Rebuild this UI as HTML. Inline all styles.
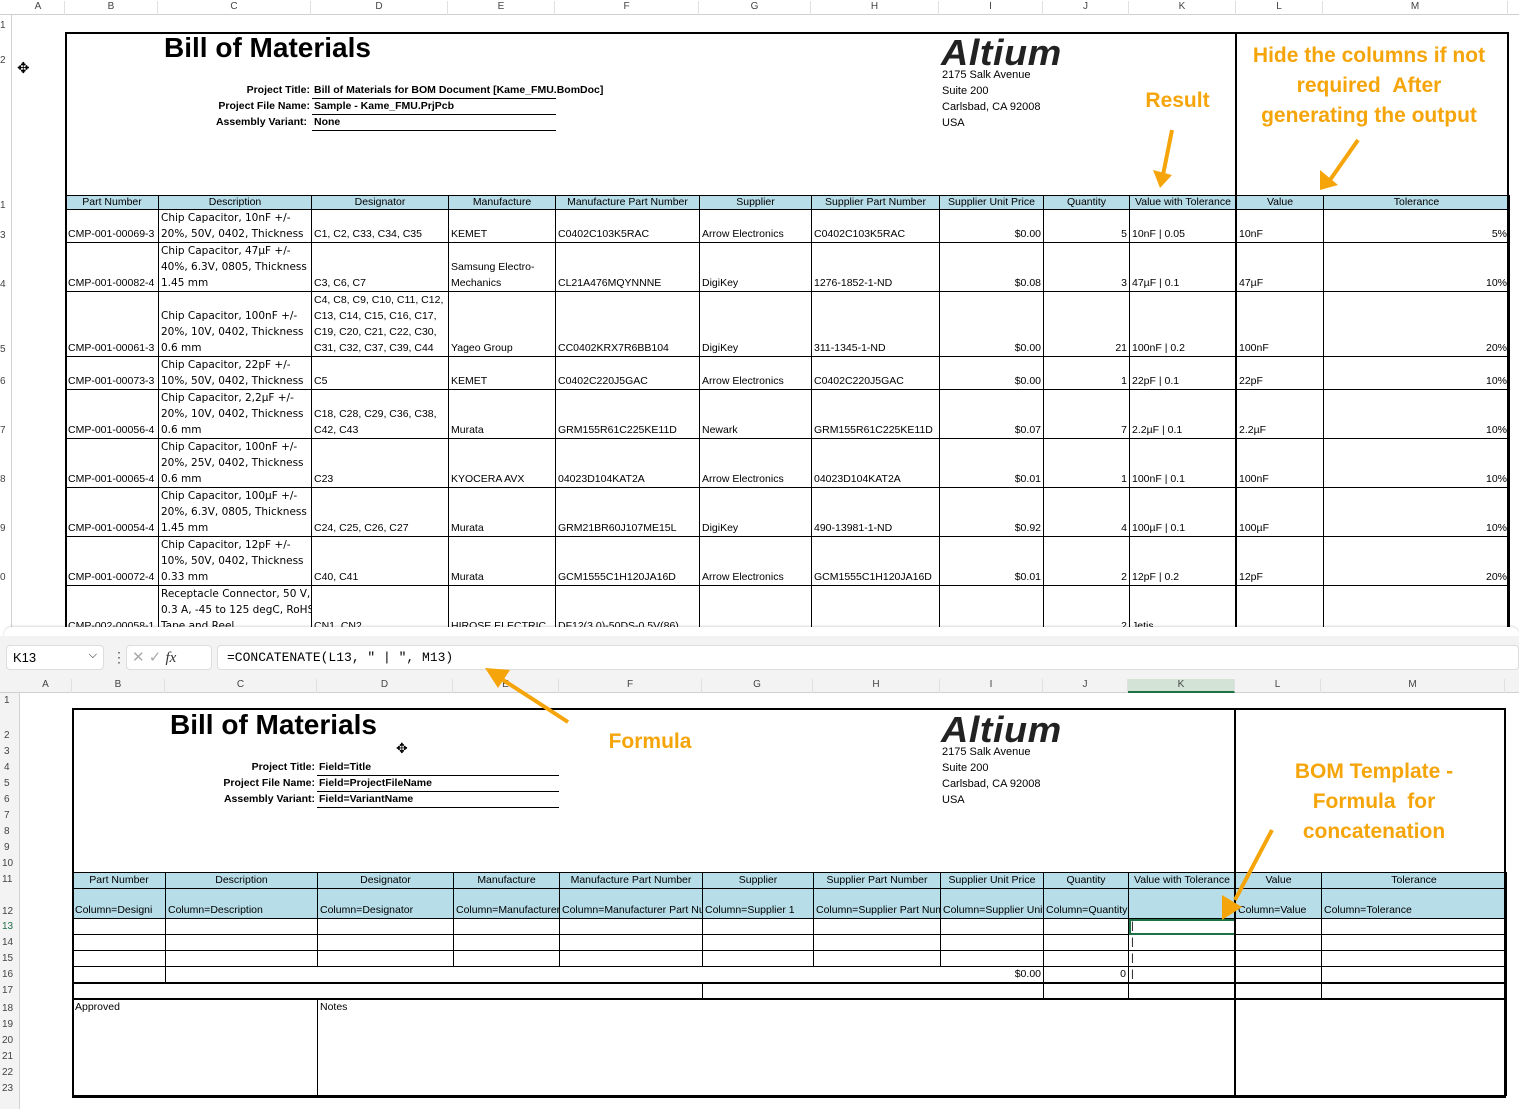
<!DOCTYPE html><html><head><meta charset="utf-8"><style>
*{margin:0;padding:0;box-sizing:border-box}
body{width:1519px;height:1109px;position:relative;overflow:hidden;background:#fff;font-family:"Liberation Sans",Arial,sans-serif;color:#000}
.a{position:absolute}
table{border-collapse:collapse;table-layout:fixed;position:absolute;font-size:10.5px}
td{border:1px solid #000;vertical-align:bottom;padding:0 2px 0;overflow:hidden;white-space:nowrap;line-height:15px}
td.w{font-family:"DejaVu Sans",sans-serif;font-size:10.5px;line-height:16px}
td.w2{line-height:16px}
tr.h td{background:#b7dde8;text-align:center;vertical-align:middle;line-height:13px}
.r{text-align:right}
.colh{position:absolute;height:15px;background:#fff;border-bottom:1px solid #d0d0d0;font-size:10px;color:#444}
.colh span{position:absolute;top:1px;text-align:center;border-right:1px solid #e0e0e0;height:14px}
.or{color:#f5a50a;font-weight:bold;font-size:21px;text-align:center;line-height:30px}
.rn{position:absolute;left:0;font-size:10px;color:#444;width:14px}
.big{font-size:28px;font-weight:bold}
.lab{font-size:10.5px;font-weight:bold}
.ul{border-bottom:1px solid #000;position:absolute;height:15px;font-size:10.5px;font-weight:bold;padding-left:2px}
.alt{font-size:36px;font-weight:900;font-style:italic;color:#222;letter-spacing:0.5px;transform:scaleX(1.05);transform-origin:left}
.addr{font-size:11px;line-height:16px}
</style></head><body>

<div class="colh" style="left:0;top:0;width:1519px">
<span style="left:12px;width:53px">A</span><span style="left:65px;width:93px">B</span><span style="left:158px;width:153px">C</span><span style="left:311px;width:137px">D</span><span style="left:448px;width:107px">E</span><span style="left:555px;width:144px">F</span><span style="left:699px;width:112px">G</span><span style="left:811px;width:128px">H</span><span style="left:939px;width:104px">I</span><span style="left:1043px;width:86px">J</span><span style="left:1129px;width:107px">K</span><span style="left:1236px;width:87px">L</span><span style="left:1323px;width:185px">M</span></div>
<div class="a" style="left:0;top:15px;width:12px;height:620px;border-right:1px solid #d0d0d0"></div>
<div class="rn" style="top:20px">1</div><div class="rn" style="top:55px">2</div><div class="rn" style="top:200px">1</div><div class="rn" style="top:230px">3</div><div class="rn" style="top:279px">4</div><div class="rn" style="top:344px">5</div><div class="rn" style="top:376px">6</div><div class="rn" style="top:425px">7</div><div class="rn" style="top:474px">8</div><div class="rn" style="top:523px">9</div><div class="rn" style="top:572px">0</div>
<div class="a" style="left:17px;top:59px;font-size:15px">✥</div>

<div class="a" style="left:65px;top:32px;width:1444px;height:164px;border:2px solid #000;border-bottom:none"></div>
<div class="a big" style="left:164px;top:32px">Bill of Materials</div>
<div class="a lab" style="left:180px;top:84px;width:130px;text-align:right">Project Title:</div>
<div class="a lab" style="left:180px;top:100px;width:130px;text-align:right">Project File Name:</div>
<div class="a lab" style="left:180px;top:116px;width:127px;text-align:right">Assembly Variant:</div>
<div class="ul" style="left:312px;top:84px;width:244px;white-space:nowrap;overflow:visible">Bill of Materials for BOM Document [Kame_FMU.BomDoc]</div>
<div class="ul" style="left:312px;top:100px;width:244px">Sample - Kame_FMU.PrjPcb</div>
<div class="ul" style="left:312px;top:116px;width:244px">None</div>
<div class="a alt" style="left:941px;top:32px">Altium</div>
<div class="a addr" style="left:942px;top:67px">2175 Salk Avenue<br>Suite 200<br>Carlsbad, CA 92008<br>USA</div>
<div class="a or" style="left:1130px;top:86px;width:95px">Result</div>
<div class="a or" style="left:1240px;top:41px;width:258px">Hide the columns if not<br>required &nbsp;After<br>generating the output</div>

<table style="left:65px;top:195px;width:1444px">
<colgroup><col style="width:93px"><col style="width:153px"><col style="width:137px"><col style="width:107px"><col style="width:144px"><col style="width:112px"><col style="width:128px"><col style="width:104px"><col style="width:86px"><col style="width:107px"><col style="width:87px"><col style="width:186px"></colgroup>
<tr class="h" style="height:14px"><td>Part Number</td><td>Description</td><td>Designator</td><td>Manufacture</td><td>Manufacture Part Number</td><td>Supplier</td><td>Supplier Part Number</td><td>Supplier Unit Price</td><td>Quantity</td><td>Value with Tolerance</td><td>Value</td><td>Tolerance</td></tr>
<tr style="height:33px"><td>CMP-001-00069-3</td><td class="w">Chip Capacitor, 10nF +/-<br>20%, 50V, 0402, Thickness</td><td>C1, C2, C33, C34, C35</td><td>KEMET</td><td>C0402C103K5RAC</td><td>Arrow Electronics</td><td>C0402C103K5RAC</td><td class="r">$0.00</td><td class="r">5</td><td>10nF | 0.05</td><td>10nF</td><td class="r">5%</td></tr>
<tr style="height:49px"><td>CMP-001-00082-4</td><td class="w">Chip Capacitor, 47µF +/-<br>40%, 6.3V, 0805, Thickness<br>1.45 mm</td><td>C3, C6, C7</td><td class="w2">Samsung Electro-<br>Mechanics</td><td>CL21A476MQYNNNE</td><td>DigiKey</td><td>1276-1852-1-ND</td><td class="r">$0.08</td><td class="r">3</td><td>47µF | 0.1</td><td>47µF</td><td class="r">10%</td></tr>
<tr style="height:65px"><td>CMP-001-00061-3</td><td class="w">Chip Capacitor, 100nF +/-<br>20%, 10V, 0402, Thickness<br>0.6 mm</td><td class="w2">C4, C8, C9, C10, C11, C12,<br>C13, C14, C15, C16, C17,<br>C19, C20, C21, C22, C30,<br>C31, C32, C37, C39, C44</td><td>Yageo Group</td><td>CC0402KRX7R6BB104</td><td>DigiKey</td><td>311-1345-1-ND</td><td class="r">$0.00</td><td class="r">21</td><td>100nF | 0.2</td><td>100nF</td><td class="r">20%</td></tr>
<tr style="height:32px"><td>CMP-001-00073-3</td><td class="w">Chip Capacitor, 22pF +/-<br>10%, 50V, 0402, Thickness</td><td>C5</td><td>KEMET</td><td>C0402C220J5GAC</td><td>Arrow Electronics</td><td>C0402C220J5GAC</td><td class="r">$0.00</td><td class="r">1</td><td>22pF | 0.1</td><td>22pF</td><td class="r">10%</td></tr>
<tr style="height:49px"><td>CMP-001-00056-4</td><td class="w">Chip Capacitor, 2,2µF +/-<br>20%, 10V, 0402, Thickness<br>0.6 mm</td><td class="w2">C18, C28, C29, C36, C38,<br>C42, C43</td><td>Murata</td><td>GRM155R61C225KE11D</td><td>Newark</td><td>GRM155R61C225KE11D</td><td class="r">$0.07</td><td class="r">7</td><td>2.2µF | 0.1</td><td>2.2µF</td><td class="r">10%</td></tr>
<tr style="height:49px"><td>CMP-001-00065-4</td><td class="w">Chip Capacitor, 100nF +/-<br>20%, 25V, 0402, Thickness<br>0.6 mm</td><td>C23</td><td>KYOCERA AVX</td><td>04023D104KAT2A</td><td>Arrow Electronics</td><td>04023D104KAT2A</td><td class="r">$0.01</td><td class="r">1</td><td>100nF | 0.1</td><td>100nF</td><td class="r">10%</td></tr>
<tr style="height:49px"><td>CMP-001-00054-4</td><td class="w">Chip Capacitor, 100µF +/-<br>20%, 6.3V, 0805, Thickness<br>1.45 mm</td><td>C24, C25, C26, C27</td><td>Murata</td><td>GRM21BR60J107ME15L</td><td>DigiKey</td><td>490-13981-1-ND</td><td class="r">$0.92</td><td class="r">4</td><td>100µF | 0.1</td><td>100µF</td><td class="r">10%</td></tr>
<tr style="height:49px"><td>CMP-001-00072-4</td><td class="w">Chip Capacitor, 12pF +/-<br>10%, 50V, 0402, Thickness<br>0.33 mm</td><td>C40, C41</td><td>Murata</td><td>GCM1555C1H120JA16D</td><td>Arrow Electronics</td><td>GCM1555C1H120JA16D</td><td class="r">$0.01</td><td class="r">2</td><td>12pF | 0.2</td><td>12pF</td><td class="r">20%</td></tr>
<tr style="height:49px"><td>CMP-002-00058-1</td><td class="w">Receptacle Connector, 50 V,<br>0.3 A, -45 to 125 degC, RoHS,<br>Tape and Reel</td><td>CN1, CN2</td><td>HIROSE ELECTRIC</td><td>DF12(3.0)-50DS-0.5V(86)</td><td></td><td></td><td></td><td class="r">2</td><td>Jetis</td><td></td><td></td></tr>
</table>
<div class="a" style="left:65px;top:32px;width:2px;height:600px;background:#000"></div>
<div class="a" style="left:1235px;top:32px;width:2px;height:600px;background:#000"></div>
<div class="a" style="left:1507px;top:32px;width:2px;height:600px;background:#000"></div>
<svg class="a" style="left:1140px;top:125px" width="50" height="70"><path d="M32 5 L22 55" stroke="#f5a50a" stroke-width="4" fill="none"/><path d="M13 45 L20 63 L32 50Z" fill="#f5a50a"/></svg>
<svg class="a" style="left:1310px;top:135px" width="60" height="60"><path d="M48 5 L20 45" stroke="#f5a50a" stroke-width="4" fill="none"/><path d="M10 35 L10 55 L28 50Z" fill="#f5a50a"/></svg>

<div class="a" style="left:4px;top:627px;width:1515px;height:20px;background:#fff;border-radius:8px 8px 0 0;box-shadow:0 -1px 2px rgba(0,0,0,.15)"></div>
<div class="a" style="left:0;top:636px;width:1519px;height:56px;background:#f3f3f3"></div>
<div class="a" style="left:6px;top:645px;width:98px;height:25px;background:#fff;border:1px solid #ddd;border-radius:4px;font-size:13px;padding:4px 0 0 6px">K13<span style="position:absolute;right:6px;top:3px;font-size:11px">⌵</span></div>
<div class="a" style="left:112px;top:649px;font-size:14px;color:#555">⋮</div>
<div class="a" style="left:126px;top:645px;width:86px;height:25px;background:#fff;border:1px solid #ddd;border-radius:4px;font-size:15px;color:#aaa;padding:2px 0 0 5px">✕ ✓ <i style="color:#333;font-family:'Liberation Serif'">fx</i></div>
<div class="a" style="left:217px;top:645px;width:1302px;height:25px;background:#fff;border:1px solid #ddd;border-radius:4px;font-family:'Liberation Mono',monospace;font-size:13px;padding:4px 0 0 9px">=CONCATENATE(L13, " | ", M13)</div>

<div class="colh" style="left:0;top:678px;width:1519px;background:#f3f3f3">
<span style="left:20px;width:52px">A</span><span style="left:72px;width:93px">B</span><span style="left:165px;width:152px">C</span><span style="left:317px;width:136px">D</span><span style="left:453px;width:106px">E</span><span style="left:559px;width:143px">F</span><span style="left:702px;width:111px">G</span><span style="left:813px;width:127px">H</span><span style="left:940px;width:103px">I</span><span style="left:1043px;width:85px">J</span><span style="left:1128px;width:107px;background:#d3e3d6;border-bottom:2px solid #1e7145">K</span><span style="left:1235px;width:86px">L</span><span style="left:1321px;width:184px">M</span></div>
<div class="a" style="left:0;top:693px;width:20px;height:416px;background:#f3f3f3;border-right:1px solid #d0d0d0"></div>
<div class="rn" style="top:695px;left:4px">1</div><div class="rn" style="top:730px;left:4px">2</div><div class="rn" style="top:746px;left:4px">3</div><div class="rn" style="top:762px;left:4px">4</div><div class="rn" style="top:778px;left:4px">5</div><div class="rn" style="top:794px;left:4px">6</div><div class="rn" style="top:810px;left:4px">7</div><div class="rn" style="top:826px;left:4px">8</div><div class="rn" style="top:842px;left:4px">9</div><div class="rn" style="top:858px;left:2px">10</div><div class="rn" style="top:874px;left:2px">11</div><div class="rn" style="top:906px;left:2px">12</div><div class="rn" style="top:921px;left:2px;color:#1e7145">13</div><div class="rn" style="top:937px;left:2px">14</div><div class="rn" style="top:953px;left:2px">15</div><div class="rn" style="top:969px;left:2px">16</div><div class="rn" style="top:985px;left:2px">17</div><div class="rn" style="top:1003px;left:2px">18</div><div class="rn" style="top:1019px;left:2px">19</div><div class="rn" style="top:1035px;left:2px">20</div><div class="rn" style="top:1051px;left:2px">21</div><div class="rn" style="top:1067px;left:2px">22</div><div class="rn" style="top:1083px;left:2px">23</div>

<div class="a" style="left:72px;top:708px;width:1434px;height:165px;border:2px solid #000;border-bottom:none"></div>
<div class="a big" style="left:170px;top:709px">Bill of Materials</div>
<div class="a" style="left:396px;top:740px;font-size:14px">✥</div>
<div class="a lab" style="left:185px;top:761px;width:130px;text-align:right">Project Title:</div>
<div class="a lab" style="left:185px;top:777px;width:130px;text-align:right">Project File Name:</div>
<div class="a lab" style="left:185px;top:793px;width:130px;text-align:right">Assembly Variant:</div>
<div class="ul" style="left:317px;top:761px;width:242px">Field=Title</div>
<div class="ul" style="left:317px;top:777px;width:242px">Field=ProjectFileName</div>
<div class="ul" style="left:317px;top:793px;width:242px">Field=VariantName</div>
<div class="a alt" style="left:941px;top:709px">Altium</div>
<div class="a addr" style="left:942px;top:744px">2175 Salk Avenue<br>Suite 200<br>Carlsbad, CA 92008<br>USA</div>
<div class="a or" style="left:600px;top:727px;width:100px">Formula</div>
<div class="a or" style="left:1265px;top:757px;width:218px">BOM Template -<br>Formula &nbsp;for<br>concatenation</div>

<table style="left:72px;top:872px;width:1434px">
<colgroup><col style="width:93px"><col style="width:152px"><col style="width:136px"><col style="width:106px"><col style="width:143px"><col style="width:111px"><col style="width:127px"><col style="width:103px"><col style="width:85px"><col style="width:107px"><col style="width:86px"><col style="width:185px"></colgroup>
<tr class="h" style="height:16px"><td>Part Number</td><td>Description</td><td>Designator</td><td>Manufacture</td><td>Manufacture Part Number</td><td>Supplier</td><td>Supplier Part Number</td><td>Supplier Unit Price</td><td>Quantity</td><td>Value with Tolerance</td><td>Value</td><td>Tolerance</td></tr>
<tr style="height:30px;background:#b7dde8"><td>Column=Designi</td><td>Column=Description</td><td>Column=Designator</td><td>Column=Manufacturer</td><td>Column=Manufacturer Part Nu</td><td>Column=Supplier 1</td><td>Column=Supplier Part Num</td><td>Column=Supplier Unit</td><td>Column=Quantity</td><td></td><td>Column=Value</td><td>Column=Tolerance</td></tr>
<tr style="height:16px"><td></td><td></td><td></td><td></td><td></td><td></td><td></td><td></td><td></td><td style="outline:2px solid #1e7145;outline-offset:-2px">|</td><td></td><td></td></tr>
<tr style="height:16px"><td></td><td></td><td></td><td></td><td></td><td></td><td></td><td></td><td></td><td>|</td><td></td><td></td></tr>
<tr style="height:16px"><td></td><td></td><td></td><td></td><td></td><td></td><td></td><td></td><td></td><td>|</td><td></td><td></td></tr>
<tr style="height:16px"><td style="border-bottom:2px solid #000"></td><td colspan="7" class="r" style="border-bottom:2px solid #000">$0.00</td><td class="r" style="border-bottom:2px solid #000">0</td><td style="border-bottom:2px solid #000">|</td><td style="border-bottom:2px solid #000"></td><td style="border-bottom:2px solid #000"></td></tr>
<tr style="height:16px"><td colspan="5"></td><td colspan="3"></td><td></td><td></td><td></td><td></td></tr>
<tr style="height:96px"><td colspan="2" style="vertical-align:top;border-top:2px solid #000">Approved</td><td colspan="8" style="vertical-align:top;border-top:2px solid #000">Notes</td><td colspan="2" style="border-top:2px solid #000"></td></tr>
</table>
<div class="a" style="left:72px;top:708px;width:2px;height:390px;background:#000"></div>
<div class="a" style="left:1234px;top:708px;width:2px;height:390px;background:#000"></div>
<div class="a" style="left:1504px;top:708px;width:2px;height:390px;background:#000"></div>
<div class="a" style="left:72px;top:1096px;width:1434px;height:2px;background:#000"></div>
<div class="a" style="left:20px;top:1098px;width:1499px;height:11px;background:#fff"></div>
<svg class="a" style="left:480px;top:660px" width="100" height="70"><path d="M88 62 L20 18" stroke="#f5a50a" stroke-width="4" fill="none"/><path d="M5 8 L30 10 L18 28Z" fill="#f5a50a"/></svg>
<svg class="a" style="left:1210px;top:825px" width="75" height="100"><path d="M62 5 L25 75" stroke="#f5a50a" stroke-width="4" fill="none"/><path d="M12 70 L12 95 L32 82Z" fill="#f5a50a"/></svg>
</body></html>
